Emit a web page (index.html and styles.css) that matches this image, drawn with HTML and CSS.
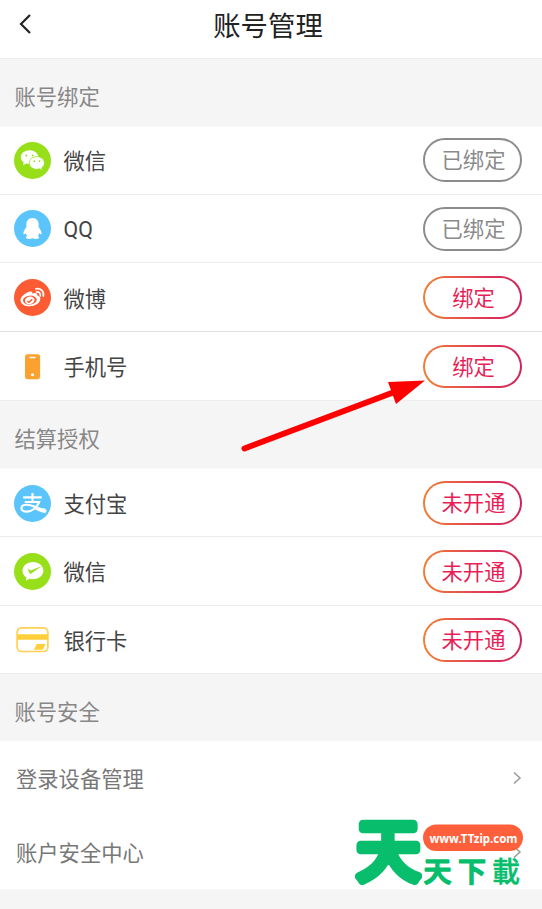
FILE: index.html
```html
<!DOCTYPE html>
<html lang="zh-CN">
<head>
<meta charset="utf-8">
<title>账号管理</title>
<link rel="stylesheet" href="styles.css">
</head>
<body>
<main class="screen">
  <header class="topbar">
    <svg class="back" viewBox="0 0 16 24"><path d="M14 3 5 12l9 9"/></svg>
    <h1>账号管理</h1>
  </header>

  <h2 class="section">账号绑定</h2>
  <div class="row first">
    <svg class="icon" viewBox="0 0 38 38"><circle cx="19" cy="19" r="19" fill="#97df18"/><path fill="#fff" d="M16 8.500c-5 0-9 3.100-9 7.100 0 2.300 1.200 4.200 3.100 5.400L9.300 24l3.400-1.900c1 .3 2 .4 3.300.4 5 0 9-3 9-6.900s-4-7.100-9-7.100z"/><path fill="#fff" stroke="#97df18" stroke-width=".8" d="M23.400 15c-4.300 0-7.700 2.900-7.700 6.500s3.400 6.500 7.700 6.500c1 0 2-.2 2.900-.5l2.900 1.700-.8-2.700c1.700-1.200 2.800-3 2.800-5 0-3.600-3.500-6.500-7.800-6.500z"/><g fill="#97df18"><circle cx="12.700" cy="13.800" r="1"/><circle cx="19.200" cy="13.800" r="1"/><circle cx="20.800" cy="19.700" r=".9"/><circle cx="26.200" cy="19.700" r=".9"/></g></svg>
    <span class="name">微信</span><span class="pill done">已绑定</span>
  </div>
  <div class="row">
    <svg class="icon" viewBox="0 0 38 38"><circle cx="19" cy="19" r="19" fill="#5bc5fb"/><path fill="#fff" d="M19 8.300c-4 0-6.300 3-6.300 6.600v2.600c-1.900 2.500-3.400 5.400-2.900 7.200.3.900 1.300.2 2.200-1.100.3 1.300.9 2.300 1.800 3.200-1 .4-1.600.9-1.600 1.500 0 2 5.600 1.800 6.800.5 1.200 1.300 6.800 1.500 6.800-.5 0-.6-.6-1.100-1.600-1.500.9-.9 1.500-1.900 1.800-3.200.9 1.300 1.900 2 2.200 1.100.5-1.800-1-4.700-2.900-7.200v-2.600c0-3.600-2.300-6.600-6.300-6.600z"/></svg>
    <span class="name latin">QQ</span><span class="pill done">已绑定</span>
  </div>
  <div class="row low">
    <svg class="icon" viewBox="0 0 38 38"><circle cx="19" cy="19" r="19" fill="#fc5b33"/><path fill="#fff" d="M15.500 13.200c2.200-1 3.700-.3 3.200 1.800 2.500-1 5.800-.9 5.200 2 2.300.7 3.400 1.800 3.100 3.900-.5 4.200-5.400 7.100-10.600 7.100-5.400 0-9.700-2.600-9.700-6.300 0-3.200 4.700-7.200 8.800-8.500z"/><ellipse cx="16.300" cy="21.700" rx="7.100" ry="4.600" transform="rotate(-6 16.300 21.700)" fill="#fc5b33"/><ellipse cx="16.200" cy="22" rx="5" ry="3.900" transform="rotate(-16 16.200 22)" fill="#fff"/><path d="m13.800 22.800 1.600 1.200 3.300-3.300" fill="none" stroke="#fc5b33" stroke-width="1.500"/><path fill="none" stroke="#fff" stroke-width="1.700" stroke-linecap="round" d="M22.500 10.100c5-1 8.700 2.700 7.600 7.400M23 13.300c2.800-.5 4.600 1.500 4 4"/></svg>
    <span class="name">微博</span><span class="pill">绑定</span>
  </div>
  <div class="row low strong">
    <svg class="icon" viewBox="0 0 38 38"><rect x="11.300" y="6.500" width="15.500" height="25.500" rx="2.500" fill="#fca02f"/><path d="M16.500 9.800h5" stroke="#fff" stroke-width="1.600" stroke-linecap="round"/><circle cx="19" cy="27.500" r="1.600" fill="#fff"/></svg>
    <span class="name">手机号</span><span class="pill">绑定</span>
  </div>

  <h2 class="section">结算授权</h2>
  <div class="row settle low">
    <svg class="icon" viewBox="0 0 38 38"><circle cx="19" cy="19" r="19" fill="#5bc5fb"/><path fill="none" stroke="#fff" stroke-width="2.200" d="M9.500 12.700h19M19 8.300v8.700M11 17.500h14.800c-2 5.200-7.200 9.800-12.300 9.800-3.500 0-5.800-1.300-5.800-3.500 0-2.100 2.300-3.500 5.600-3.500 5.500 0 10.500 3.900 19 5.300"/><path fill="#fff" d="M21 22.300c4 1.700 7.500 2.800 12.700 3.300l-1.500 3.300c-5-.9-8.800-2.700-12.500-5z"/></svg>
    <span class="name">支付宝</span><span class="pill">未开通</span>
  </div>
  <div class="row settle low">
    <svg class="icon" viewBox="0 0 38 38"><circle cx="19" cy="19" r="19" fill="#97df18"/><path fill="#fff" d="M19.500 9.300c-6 0-10.800 4-10.800 8.900 0 2.900 1.500 5.300 4 6.900l-.6 3.300 3.900-1.900c1.100.3 2.200.4 3.500.4 6 0 10.700-3.900 10.700-8.700s-4.700-8.900-10.700-8.900z"/><path fill="#97df18" d="m13.900 16 3.300 2.100 11.500-4.800-11.400 7.900c-.5.300-1 .1-1.300-.4z"/></svg>
    <span class="name">微信</span><span class="pill">未开通</span>
  </div>
  <div class="row settle low">
    <svg class="icon" viewBox="0 0 38 38"><rect x="3.200" y="7" width="31.600" height="24.300" rx="4.500" fill="#fff" stroke="#ffd052" stroke-width="1.700"/><path fill="#ffcf3b" d="M3.200 13.500h31.600v5.800H3.200zM23.300 23.500h9l-2.600 6h-9.200z"/></svg>
    <span class="name">银行卡</span><span class="pill">未开通</span>
  </div>

  <h2 class="section">账号安全</h2>
  <nav class="links">
    <a class="link"><span>登录设备管理</span><svg class="chev" viewBox="0 0 10 14"><path d="m2 1.500 6 5.500-6 5.500"/></svg></a>
    <a class="link"><span>账户安全中心</span><svg class="chev" viewBox="0 0 10 14"><path d="m2 1.500 6 5.500-6 5.500"/></svg></a>
  </nav>

  <svg class="arrow" viewBox="0 0 190 80"><path d="M9.500 73.500 162 16" stroke="#f00" stroke-width="6" stroke-linecap="round"/><path fill="#f00" d="m190 5.500-37 1.500 8 22z"/></svg>

  <svg class="brand" viewBox="0 0 180 94">
    <g class="brand-text">
      <text class="brand-big" transform="translate(6.500 60) scale(1.060 1.090)">天</text>
      <text class="brand-small" x="73.500" y="67">天</text>
      <text class="brand-small" x="108" y="67">下</text>
      <text class="brand-small dense" x="142" y="67">載</text>
    </g>
    <rect x="73" y="9.500" width="100" height="26.500" rx="13.200" fill="#ff603b"/>
    <text class="brand-url" x="79.500" y="27.500" textLength="88" lengthAdjust="spacingAndGlyphs">www.TTzip.com</text>
  </svg>
</main>
</body>
</html>
```
FILE: styles.css
```css
* { box-sizing: border-box; }
body {
  margin: 0;
  background: #f5f5f5;
  font-family: "Noto Sans CJK SC", sans-serif;
  font-size: 21.3px;
  color: #444;
}
.screen {
  position: relative;
  height: 909px;
  overflow: hidden;
}
.topbar {
  display: grid;
  grid-template-columns: 34px 1fr 56px;
  align-items: center;
  height: 58px;
  padding: 0 0 10px 16px;
  background: #fff;
}
.back {
  width: 16px;
  height: 24px;
  fill: none;
  stroke: #222;
  stroke-width: 2.2;
}
h1 {
  margin: 0;
  text-align: center;
  font-size: 27.4px;
  line-height: 48px;
  font-weight: 400;
  color: #222;
}
.section {
  height: 68px;
  margin: 0;
  padding: 4px 0 0 14.500px;
  border-top: 1px solid #ededed;
  background: #f5f5f5;
  font-size: 21.3px;
  line-height: 66px;
  font-weight: 400;
  color: #878787;
}
.row {
  display: flex;
  align-items: center;
  height: 68.200px;
  padding: 0 20px 0 14px;
  border-top: 1px solid #ededed;
  background: #fff;
}
.row.settle { height: 68.400px; }
.row.low { padding-top: 1.200px; }
.row.first { padding-bottom: 1px; }
.section + .row { border-top-color: #fbfbfb; }
.row.strong {
  height: 69.200px;
  border-top-color: #e0e0e0;
}
.icon {
  width: 37px;
  height: 37px;
  margin-right: 12.500px;
}
.name {
  flex: 1;
  line-height: 32px;
}
.latin {
  font-family: Roboto, sans-serif;
  padding-top: 2px;
}
.pill {
  width: 99px;
  height: 43.500px;
  border: 2px solid transparent;
  border-radius: 22px;
  background: linear-gradient(#fff, #fff) padding-box,
    linear-gradient(90deg, #f08035, #df3558 65%, #cf2458) border-box;
  text-align: center;
  padding-left: 2px;
  line-height: 38.500px;
  color: #e91e56;
}
.pill.done {
  border-color: #8c8c8c;
  background: #fff;
  color: #8a8a8a;
}
.links {
  height: 148px;
  background: #fff;
}
.link {
  display: flex;
  justify-content: space-between;
  align-items: center;
  height: 74px;
  padding: 0 20px 0 16px;
  color: #777;
}
.chev {
  width: 10px;
  height: 14px;
  fill: none;
  stroke: #999;
  stroke-width: 1.500;
}
.arrow {
  position: absolute;
  left: 235px;
  top: 375px;
  width: 190px;
  height: 80px;
}
.brand {
  position: absolute;
  left: 350px;
  top: 815px;
  width: 180px;
  height: 94px;
  overflow: visible;
}
.brand-text {
  fill: #08bd6c;
  stroke: #08bd6c;
  stroke-linejoin: round;
  font-family: "Noto Sans CJK SC", sans-serif;
}
.brand-big {
  font-size: 60px;
  font-weight: 400;
  stroke-width: 8px;
}
.brand-small {
  font-size: 28px;
  font-weight: 500;
  stroke-width: 1.500px;
}
.brand-small.dense { stroke-width: .4px; }
.brand-url {
  fill: #fff;
  font: 700 12.500px "Noto Sans", "Open Sans", sans-serif;
}
```
